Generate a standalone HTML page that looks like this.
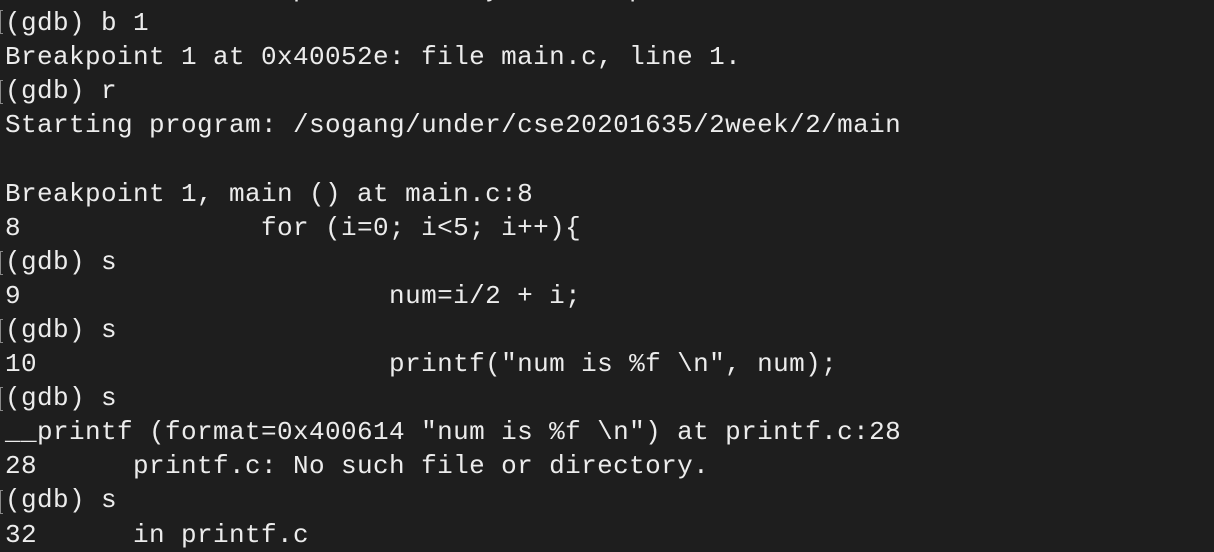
<!DOCTYPE html>
<html><head><style>
html,body{margin:0;padding:0;background:#1e1e1e;width:1214px;height:552px;overflow:hidden}
pre{margin:0;position:absolute;left:5px;top:-28px;font-family:"Liberation Mono","DejaVu Sans Mono",monospace;font-size:26px;line-height:34.1px;color:#ececec;letter-spacing:0.4px}
.m{position:absolute;left:0;width:3px;height:24px;border:1px solid #888;border-right:none;box-sizing:border-box}
</style></head><body>
<pre>                  p           y        p
(gdb) b 1
Breakpoint 1 at 0x40052e: file main.c, line 1.
(gdb) r
Starting program: /sogang/under/cse20201635/2week/2/main

Breakpoint 1, main () at main.c:8
8               for (i=0; i&lt;5; i++){
(gdb) s
9                       num=i/2 + i;
(gdb) s
10                      printf("num is %f \n", num);
(gdb) s
__printf (format=0x400614 "num is %f \n") at printf.c:28
28      printf.c: No such file or directory.
(gdb) s
32      in printf.c</pre>
<div class="m" style="top:10px"></div>
<div class="m" style="top:80px"></div>
<div class="m" style="top:251px"></div>
<div class="m" style="top:319px"></div>
<div class="m" style="top:387px"></div>
<div class="m" style="top:490px"></div>
</body></html>
